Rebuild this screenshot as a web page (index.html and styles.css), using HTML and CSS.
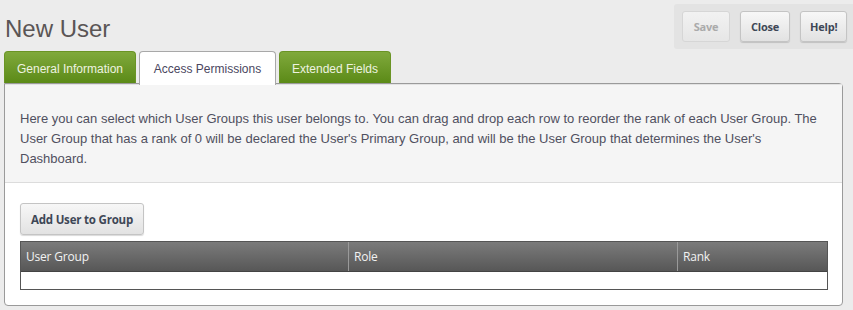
FILE: index.html
```html
<!DOCTYPE html>
<html>
<head>
<meta charset="utf-8">
<link rel="stylesheet" href="styles.css">
</head>
<body>
<div class="page">
  <div class="top">
    <h1 class="title">New User</h1>
    <div class="actions">
      <button class="btn disabled">Save</button>
      <button class="btn">Close</button>
      <button class="btn">Help!</button>
    </div>
  </div>
  <div class="tabs">
    <div class="tab green">General Information</div>
    <div class="tab active">Access Permissions</div>
    <div class="tab green">Extended Fields</div>
  </div>
  <div class="panel">
    <div class="desc">Here you can select which User Groups this user belongs to. You can drag and drop each row to reorder the rank of each User Group. The User Group that has a rank of 0 will be declared the User's Primary Group, and will be the User Group that determines the User's Dashboard.</div>
    <div class="body">
      <button class="btn add">Add User to Group</button>
      <div class="table">
        <div class="thead">
          <div class="th c1">User Group</div>
          <div class="th c2">Role</div>
          <div class="th c3">Rank</div>
        </div>
        <div class="trow"></div>
      </div>
    </div>
  </div>
</div>
</body>
</html>
```
FILE: styles.css
```css
* { box-sizing: border-box; }
html, body { margin: 0; padding: 0; }
body {
  background: #ececec;
  font-family: "Liberation Sans", Arial, sans-serif;
  width: 853px;
  height: 310px;
  overflow: hidden;
}
.page { padding: 0 0 0 4px; }
.top {
  display: flex;
  justify-content: space-between;
  align-items: flex-start;
  height: 51px;
}
.title {
  margin: 14px 0 0 1px;
  font-weight: normal;
  font-size: 24px;
  line-height: 30px;
  color: #5a5555;
}
.actions {
  margin-top: 4px;
  background: #e3e3e3;
  height: 45px;
  width: 179px;
  display: flex;
  gap: 10px;
  padding: 7px 0 0 8px;
  border-radius: 3px 0 0 3px;
}
.btn {
  font-family: "Open Sans", "DejaVu Sans", sans-serif;
  font-weight: 700;
  font-size: 11px;
  color: #3e4756;
  height: 31px;
  padding: 0 9px;
  border: 1px solid #c4c4c4;
  border-radius: 3px;
  background: linear-gradient(#f7f7f7, #e2e2e2);
  box-shadow: 0 1px 1px rgba(0,0,0,0.15);
  letter-spacing: -0.2px;
  white-space: nowrap;
}
.actions .btn:nth-child(1) { width: 48px; }
.actions .btn:nth-child(2) { width: 50px; }
.actions .btn:nth-child(3) { width: 47px; }
.btn.disabled { color: #aaa; border-color: #d6d6d6; background: linear-gradient(#f2f2f2, #e6e6e6); box-shadow: none; }
.tabs {
  display: flex;
  gap: 3px;
  height: 33px;
  position: relative;
  z-index: 1;
}
.tab {
  font-size: 12px;
  line-height: 34px;
  height: 33px;
  padding: 0;
  border-radius: 4px 4px 0 0;
  text-align: center;
  white-space: nowrap;
}
.tab.green {
  color: #eef3e0;
  background: linear-gradient(#80a93c, #5b8a17);
  border: 1px solid #6a9424;
  border-bottom: none;
  height: 32px;
}
.tab:nth-child(1) { width: 132px; }
.tab:nth-child(2) { width: 137px; }
.tab:nth-child(3) { width: 112px; }
.tab.active {
  background: #fff;
  color: #4a4660;
  border: 1px solid #a8a8a8;
  border-bottom: none;
  height: 34px;
}
.panel {
  margin-top: -1px;
  width: 839px;
  height: 223px;
  background: #fff;
  border: 1px solid #9a9a9a;
  border-radius: 0 4px 4px 4px;
}
.desc {
  background: #f5f5f5;
  border-top: 1px solid #e2e2e2;
  border-bottom: 1px solid #dcdcdc;
  padding: 24px 15px 15px 15px;
  font-size: 13px;
  line-height: 20px;
  color: #505060;
  height: 99px;
}
.body { padding: 20px 15px 0 15px; }
.btn.add { width: 124px; padding: 0; height: 32px; font-size: 11.5px; }
.table {
  margin-top: 6px;
  width: 808px;
  border: 1px solid #555;
}
.thead {
  display: flex;
  height: 30px;
  background: linear-gradient(#7b7b7b, #575757);
  border-bottom: 1px solid #444;
}
.th {
  font-family: "Open Sans", "DejaVu Sans", sans-serif;
  font-size: 12px;
  color: #f2f2f2;
  line-height: 30px;
  padding-left: 5px;
  letter-spacing: -0.2px;
}
.th.c1 { width: 328px; border-right: 1px solid #9a9a9a; }
.th.c2 { width: 329px; border-right: 1px solid #9a9a9a; }
.th.c3 { flex: 1; }
.trow { height: 17px; background: #fff; }
```
